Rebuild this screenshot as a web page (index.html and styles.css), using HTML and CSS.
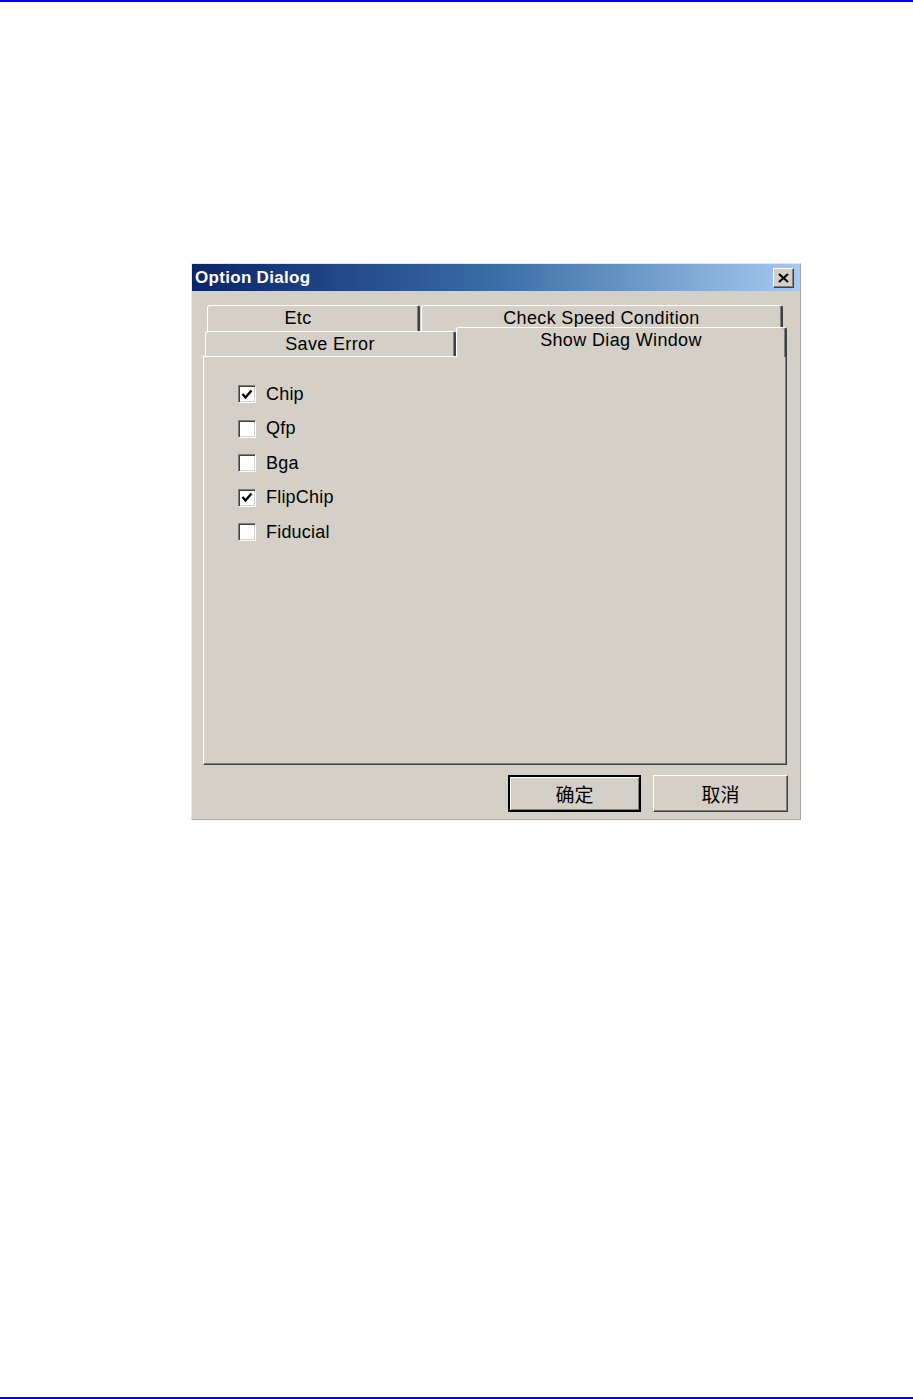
FILE: index.html
```html
<!DOCTYPE html>
<html>
	<head>
		<title>Option Dialog</title>
		<meta charset="utf-8">
		<link rel="stylesheet" href="styles.css">
	</head>
	<body>
		<div class="page">
			<div class="dialog">
				<div class="titlebar">
					<span class="title">Option Dialog</span>
					<span class="close">
						<svg width="11" height="10" viewBox="0 0 11 10">
							<path d="M1 1 L10 9 M10 1 L1 9" stroke="#000" stroke-width="2.2" />
						</svg>
					</span>
				</div>
				<div class="content">
					<div class="tabrow back">
						<div class="tab etc">Etc</div>
						<div class="tab speed">Check Speed Condition</div>
					</div>
					<div class="tabrow front">
						<div class="tab save">Save Error</div>
						<div class="tab active">Show Diag Window</div>
					</div>
					<div class="panel">
						<div class="check"><span class="box on"><svg width="12" height="11" viewBox="0 0 12 11"><path d="M1.5 5 L4.5 8.5 L10.5 1.5" fill="none" stroke="#000" stroke-width="2.4" /></svg></span>Chip</div>
						<div class="check"><span class="box"></span>Qfp</div>
						<div class="check"><span class="box"></span>Bga</div>
						<div class="check"><span class="box on"><svg width="12" height="11" viewBox="0 0 12 11"><path d="M1.5 5 L4.5 8.5 L10.5 1.5" fill="none" stroke="#000" stroke-width="2.4" /></svg></span>FlipChip</div>
						<div class="check"><span class="box"></span>Fiducial</div>
					</div>
					<div class="buttons">
						<button class="btn default">确定</button>
						<button class="btn cancel">取消</button>
					</div>
				</div>
			</div>
		</div>
	</body>
</html>
```
FILE: styles.css
```css
body
{
	margin : 0;
	background-color : #ffffff;
	font-family : "Liberation Sans", Arial, "Noto Sans CJK SC", sans-serif;
}
.page
{
	height : 1395px;
	border-top : 2px solid #0000ff;
	border-bottom : 2px solid #0000ff;
	overflow : hidden;
}
.dialog
{
	box-sizing : border-box;
	width : 610px;
	height : 557px;
	margin-top : 261px;
	margin-left : 191px;
	background-color : #d4d0c8;
	border : 1px solid;
	border-color : #e8e6e0 #a8a59e #a8a59e #e8e6e0;
}
.titlebar
{
	height : 27px;
	display : flex;
	align-items : center;
	justify-content : space-between;
	padding : 0 6px 0 3px;
	background : linear-gradient(to right, #0a246a 0%, #3a6ea5 50%, #a6caf0 100%);
}
.title
{
	color : #ffffff;
	font-weight : bold;
	font-size : 17px;
	letter-spacing : 0.3px;
}
.close
{
	box-sizing : border-box;
	width : 21px;
	height : 20px;
	display : flex;
	align-items : center;
	justify-content : center;
	background-color : #d4d0c8;
	border : 1px solid;
	border-color : #ffffff #404040 #404040 #ffffff;
	box-shadow : inset -1px -1px 0 #808080;
}
.content
{
	padding : 14px 13px 0 11px;
}
.tabrow
{
	display : flex;
	font-size : 18px;
	letter-spacing : 0.35px;
	color : #000000;
}
.back
{
	height : 26px;
	padding-left : 4px;
	gap : 1px;
}
.front
{
	height : 25px;
	padding-left : 2px;
	align-items : flex-end;
}
.tab
{
	box-sizing : border-box;
	text-align : center;
	line-height : 25px;
	background-color : #d4d0c8;
	border-top : 1px solid #ffffff;
	border-left : 1px solid #ffffff;
	border-right : 2px solid #404040;
	border-radius : 3px 3px 0 0;
	box-shadow : inset -1px 0 0 #808080;
}
.etc
{
	width : 213px;
	padding-right : 30px;
}
.speed
{
	width : 362px;
}
.save
{
	width : 251px;
	height : 25px;
	line-height : 25px;
}
.active
{
	width : 331px;
	height : 30px;
	line-height : 24px;
	margin-bottom : -1px;
	position : relative;
	z-index : 1;
}
.panel
{
	box-sizing : border-box;
	height : 409px;
	padding : 28px 0 0 34px;
	border : 1px solid;
	border-color : #ffffff #404040 #404040 #ffffff;
	box-shadow : inset -1px -1px 0 #808080;
	display : flex;
	flex-direction : column;
	gap : 16.6px;
	font-size : 18px;
	letter-spacing : 0.2px;
}
.check
{
	display : flex;
	align-items : center;
	height : 18px;
	gap : 10px;
}
.box
{
	box-sizing : border-box;
	width : 18px;
	height : 18px;
	display : flex;
	align-items : center;
	justify-content : center;
	background-color : #ffffff;
	border : 1px solid;
	border-color : #808080 #ffffff #ffffff #808080;
	box-shadow : inset 1px 1px 0 #404040, inset -1px -1px 0 #d4d0c8;
}
.buttons
{
	display : flex;
	justify-content : flex-end;
	gap : 12px;
	margin-top : 10px;
	margin-right : -1px;
}
.btn
{
	box-sizing : border-box;
	height : 37px;
	margin : 0;
	padding : 0;
	font-family : "Noto Sans CJK SC", sans-serif;
	font-size : 19px;
	color : #000000;
	background-color : #d4d0c8;
	border : 1px solid;
	border-color : #ffffff #404040 #404040 #ffffff;
	box-shadow : inset -1px -1px 0 #808080;
}
.default
{
	width : 133px;
	border : 2px solid #000000;
	box-shadow : inset 1px 1px 0 #ffffff, inset -1px -1px 0 #808080;
}
.cancel
{
	width : 135px;
}
```
